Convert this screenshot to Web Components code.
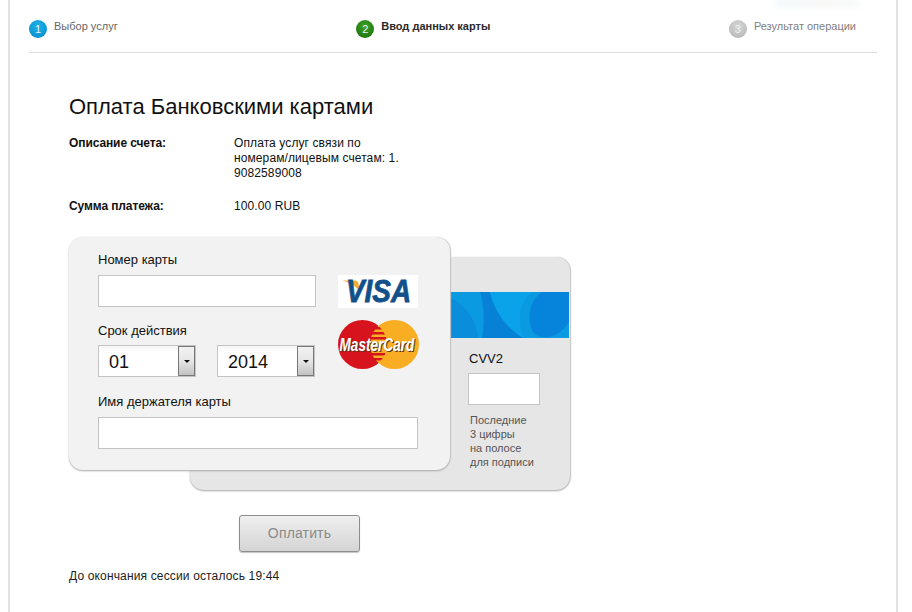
<!DOCTYPE html>
<html lang="ru">
<head>
<meta charset="utf-8">
<title>Оплата Банковскими картами</title>
<style>
  html, body { margin: 0; padding: 0; background: #fff; }
  body { font-family: "Liberation Sans", Arial, sans-serif; color: #111; height: 612px; overflow: hidden; }
</style>
</head>
<body>
<pay-page>
  <pay-steps>
    <pay-step num="1" color="blue">Выбор услуг</pay-step>
    <pay-step num="2" color="green" active>Ввод данных карты</pay-step>
    <pay-step num="3" color="gray">Результат операции</pay-step>
  </pay-steps>
  <pay-title>Оплата Банковскими картами</pay-title>
  <info-row label="Описание счета:" style="margin-top:17px">Оплата услуг связи по<br>номерам/лицевым счетам: 1.<br>9082589008</info-row>
  <info-row label="Сумма платежа:" style="margin-top:18px">100.00 RUB</info-row>
  <card-stack>
    <card-front slot="front"></card-front>
    <card-back slot="back"></card-back>
  </card-stack>
  <pay-button>Оплатить</pay-button>
  <session-note>До окончания сессии осталось 19:44</session-note>
</pay-page>

<script>
function shadow(el, markup) {
  el.attachShadow({ mode: "open" }).innerHTML = markup;
}

class PayPage extends HTMLElement {
  constructor() {
    super();
    shadow(this, `
      <style>
        :host { display: block; box-sizing: border-box; position: relative; margin-left: 8px; width: 890px; height: 612px;
                border-left: 2px solid #e2e2e2; border-right: 2px solid #e2e2e2; }
        .smear { position: absolute; left: 765px; top: 0; width: 85px; height: 7px; filter: blur(3px);
                 background: linear-gradient(90deg, #eef8fc, #f6f6f4 60%, #f5f9fa); }
      </style>
      <div class="smear"></div>
      <slot></slot>`);
  }
}

class PaySteps extends HTMLElement {
  constructor() {
    super();
    shadow(this, `
      <style>
        :host { display: block; margin: 0 19px 0 19px; padding-top: 20px; height: 32px; border-bottom: 1px solid #dcdcdc; }
        .row { display: flex; justify-content: space-between; padding-right: 21px; }
      </style>
      <div class="row"><slot></slot></div>`);
  }
}

class PayStep extends HTMLElement {
  constructor() {
    super();
    const colors = {
      blue: "radial-gradient(circle at 50% 35%, #1fb4ea, #0a94d2 70%, #0a7fb8)",
      green: "radial-gradient(circle at 50% 35%, #3fa02a, #1f7d10 70%, #16660a)",
      gray: "radial-gradient(circle at 50% 35%, #d6d6d6, #bdbdbd 70%, #a8a8a8)"
    };
    const bg = colors[this.getAttribute("color")];
    shadow(this, `
      <style>
        :host { display: flex; gap: 7px; height: 18px; font-size: 11px; line-height: 14px; color: #666; }
        :host([active]) { font-weight: bold; color: #2a2a2a; }
        :host([color="gray"]) { color: #808080; }
        .num { width: 18px; height: 18px; border-radius: 50%; background: ${bg}; color: #e8f4f8; font-weight: normal;
               font-size: 11px; line-height: 19px; text-align: center; flex: none; }
        .text { margin-top: -1px; white-space: nowrap; }
      </style>
      <span class="num">${this.getAttribute("num")}</span>
      <span class="text"><slot></slot></span>`);
  }
}

class PayTitle extends HTMLElement {
  constructor() {
    super();
    shadow(this, `
      <style>
        :host { display: block; margin: 42px 0 0 59px; font-size: 22px; line-height: 24px; color: #111; }
      </style>
      <slot></slot>`);
  }
}

class InfoRow extends HTMLElement {
  constructor() {
    super();
    shadow(this, `
      <style>
        :host { display: grid; grid-template-columns: 165px 1fr; margin-left: 59px; font-size: 12px; line-height: 15px; color: #111; }
        .label { font-weight: bold; letter-spacing: -0.1px; }
        .value { letter-spacing: 0.1px; }
      </style>
      <div class="label">${this.getAttribute("label")}</div>
      <div class="value"><slot></slot></div>`);
  }
}

class CardStack extends HTMLElement {
  constructor() {
    super();
    shadow(this, `
      <style>
        :host { display: grid; margin: 23px 0 0 59px; width: 501px; height: 253px; }
        .cell { grid-area: 1 / 1; }
        .back { margin: 20px 0 0 121px; }
        .front { position: relative; width: 381px; }
      </style>
      <div class="cell back"><slot name="back"></slot></div>
      <div class="cell front"><slot name="front"></slot></div>`);
  }
}

class TextField extends HTMLElement {
  constructor() {
    super();
    shadow(this, `
      <style>
        :host { display: block; box-sizing: border-box; height: 32px; background: #fff; border: 1px solid #c4c4c4; }
      </style>`);
  }
}

class DateSelect extends HTMLElement {
  constructor() {
    super();
    shadow(this, `
      <style>
        :host { display: flex; box-sizing: border-box; height: 32px; background: linear-gradient(#f6f6f6, #fff 25%);
                border: 1px solid #c4c4c4; font-size: 18px; line-height: 32px; color: #111; }
        .value { flex: 1; padding-left: 10px; }
        .btn { flex: none; box-sizing: border-box; width: 17px; margin: 0 0 0 auto; display: flex; align-items: center; justify-content: center;
               border: 1px solid #777; background: linear-gradient(#f2f2f2, #e6e6e6 50%, #c2c2c2); }
        .arrow { width: 0; height: 0; border-left: 3px solid transparent; border-right: 3px solid transparent; border-top: 3px solid #111; }
      </style>
      <div class="value"><slot></slot></div>
      <div class="btn"><div class="arrow"></div></div>`);
  }
}

class VisaLogo extends HTMLElement {
  constructor() {
    super();
    shadow(this, `
      <style>:host { display: block; width: 80px; height: 33px; background: #fff; } svg { display: block; }</style>
      <svg width="80" height="33" viewBox="0 0 80 33">
        <path d="M4 5.500 H17 C19 5.500 20 6.500 20.500 8.500 L22 17 C18 11 12 7.500 4 5.500 Z" fill="#f2ae2e"/>
        <text x="8" y="27" font-family="Liberation Sans, Arial, sans-serif" font-size="31" font-weight="bold" font-style="italic" fill="#12508a" textLength="65" lengthAdjust="spacingAndGlyphs" stroke="#12508a" stroke-width="0.8">VISA</text>
      </svg>`);
  }
}

class McLogo extends HTMLElement {
  constructor() {
    super();
    shadow(this, `
      <style>:host { display: block; width: 81px; height: 49px; } svg { display: block; }</style>
      <svg width="81" height="49" viewBox="0 0 81 49">
        <defs><clipPath id="lap"><circle cx="24.500" cy="24.500" r="24.500"/></clipPath></defs>
        <circle cx="24.500" cy="24.500" r="24.500" fill="#d7141d"/>
        <circle cx="56.500" cy="24.500" r="24.500" fill="#f9ad22"/>
        <g clip-path="url(#lap)" fill="#d7141d">
          <rect x="30" y="7" width="20" height="2.500"/>
          <rect x="30" y="12" width="20" height="2.500"/>
          <rect x="30" y="17" width="20" height="2.500"/>
          <rect x="30" y="33" width="20" height="2.500"/>
          <rect x="30" y="38" width="20" height="2.500"/>
          <rect x="30" y="43" width="20" height="2.500"/>
        </g>
        <g font-family="Liberation Sans, Arial, sans-serif" font-size="13.600" font-weight="bold" font-style="italic">
          <text transform="translate(2.500 31.500) scale(1 1.300)" fill="#5a3a20">MasterCard</text>
          <text transform="translate(1.500 30.500) scale(1 1.300)" fill="#fff">MasterCard</text>
        </g>
      </svg>`);
  }
}

class CardFront extends HTMLElement {
  constructor() {
    super();
    shadow(this, `
      <style>
        :host { display: block; box-sizing: border-box; width: 381px; height: 233px; background: #f2f2f2; border-radius: 14px;
                box-shadow: 0 1px 2px #a9a9a9, 1px 0 1px #d0d0d0; padding: 15px 32px 0 29px; font-size: 13px; color: #111; }
        .label { line-height: 16px; height: 16px; margin-bottom: 7px; }
        .top { display: flex; justify-content: space-between; }
        .left { width: 218px; }
        .right { display: flex; flex-direction: column; gap: 12px; padding-top: 23px; margin-right: -1px; }
        .selects { display: flex; gap: 21px; }
        .selects date-select { width: 98px; }
        .date-label { margin-top: 16px; margin-bottom: 6px; }
        .name { margin-top: 17px; }
      </style>
      <div class="top">
        <div class="left">
          <div class="label">Номер карты</div>
          <text-field></text-field>
          <div class="label date-label">Срок действия</div>
          <div class="selects">
            <date-select>01</date-select>
            <date-select>2014</date-select>
          </div>
        </div>
        <div class="right">
          <visa-logo></visa-logo>
          <mc-logo></mc-logo>
        </div>
      </div>
      <div class="name">
        <div class="label">Имя держателя карты</div>
        <text-field></text-field>
      </div>`);
  }
}

class CardBack extends HTMLElement {
  constructor() {
    super();
    shadow(this, `
      <style>
        :host { display: block; box-sizing: border-box; width: 380px; height: 233px; background: #e6e6e6; border-radius: 14px;
                box-shadow: 0 1px 2px #a9a9a9, 1px 0 1px #d0d0d0; padding-top: 35px; }
        svg { display: block; margin-left: 260px; }
        .body { margin-left: 279px; padding-top: 13px; }
        .cvv { font-size: 13px; line-height: 16px; color: #111; }
        text-field { width: 72px; margin: 6px 0 0 -1px; }
        .hint { margin: 8px 0 0 1px; font-size: 11px; line-height: 14px; color: #555; }
      </style>
      <svg width="119" height="46" viewBox="0 0 119 46">
        <rect width="119" height="46" fill="#0a9ae2"/>
        <path d="M0 6 C14 12 26 26 28 46 H0 Z" fill="#0a8ddb"/>
        <path d="M30 0 H40 C44 18 56 36 73 46 H32 C35 30 34 14 30 0 Z" fill="#0681d6"/>
        <path d="M40 0 H82 C70 8 66 28 74 46 H73 C56 36 44 18 40 0 Z" fill="#0aa2e8"/>
        <path d="M92 0 H119 V30 C112 42 98 48 88 44 C76 38 76 10 92 0 Z" fill="#0683da"/>
      </svg>
      <div class="body">
        <div class="cvv">CVV2</div>
        <text-field></text-field>
        <div class="hint">Последние<br>3 цифры<br>на полосе<br>для подписи</div>
      </div>`);
  }
}

class PayButton extends HTMLElement {
  constructor() {
    super();
    shadow(this, `
      <style>
        :host { display: block; box-sizing: border-box; width: 121px; height: 37px; margin: 25px 0 0 229px;
                border: 1px solid #8d8d8d; border-radius: 3px; background: linear-gradient(#efefef, #d4d4d4);
                box-shadow: 0 1px 1px #c4c4c4; font-size: 14px; letter-spacing: 0.15px; line-height: 34px; text-align: center; color: #8a8a8a; }
      </style>
      <slot></slot>`);
  }
}

class SessionNote extends HTMLElement {
  constructor() {
    super();
    shadow(this, `
      <style>
        :host { display: block; margin: 17px 0 0 59px; font-size: 12px; line-height: 15px; letter-spacing: 0.15px; color: #222; }
      </style>
      <slot></slot>`);
  }
}

customElements.define("pay-page", PayPage);
customElements.define("pay-steps", PaySteps);
customElements.define("pay-step", PayStep);
customElements.define("pay-title", PayTitle);
customElements.define("info-row", InfoRow);
customElements.define("card-stack", CardStack);
customElements.define("text-field", TextField);
customElements.define("date-select", DateSelect);
customElements.define("visa-logo", VisaLogo);
customElements.define("mc-logo", McLogo);
customElements.define("card-front", CardFront);
customElements.define("card-back", CardBack);
customElements.define("pay-button", PayButton);
customElements.define("session-note", SessionNote);
</script>
</body>
</html>
